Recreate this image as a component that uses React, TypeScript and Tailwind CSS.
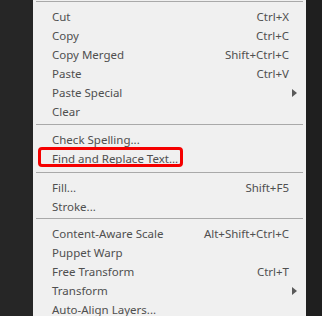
import React from "react";

type Item = { label: string; shortcut?: string; sub?: boolean; highlight?: boolean };

const groups: Item[][] = [
  [
    { label: "Cut", shortcut: "Ctrl+X" },
    { label: "Copy", shortcut: "Ctrl+C" },
    { label: "Copy Merged", shortcut: "Shift+Ctrl+C" },
    { label: "Paste", shortcut: "Ctrl+V" },
    { label: "Paste Special", sub: true },
    { label: "Clear" },
  ],
  [
    { label: "Check Spelling..." },
    { label: "Find and Replace Text...", highlight: true },
  ],
  [
    { label: "Fill...", shortcut: "Shift+F5" },
    { label: "Stroke..." },
  ],
  [
    { label: "Content-Aware Scale", shortcut: "Alt+Shift+Ctrl+C" },
    { label: "Puppet Warp" },
    { label: "Free Transform", shortcut: "Ctrl+T" },
    { label: "Transform", sub: true },
    { label: "Auto-Align Layers..." },
  ],
];

const sepClasses = [
  "",
  "mx-[3px] mb-[5px] mt-[3px] h-px bg-[#a9a9a9]",
  "mx-[3px] mb-[5px] mt-[4px] h-px bg-[#a9a9a9]",
  "mx-[3px] mb-[5px] mt-[2px] h-px bg-[#a9a9a9]",
];

function Row({ item }: { item: Item }) {
  return (
    <div className="relative flex h-[19px] items-center pl-[19px] pr-[17px]">
      <span className="flex-1 whitespace-nowrap">{item.label}</span>
      {item.shortcut && <span className="whitespace-nowrap">{item.shortcut}</span>}
      {item.sub && (
        <svg className="absolute right-[9px] top-[6px]" width="5" height="8" viewBox="0 0 5 8">
          <path d="M0 0 L5 4 L0 8 Z" fill="#5a5a5a" />
        </svg>
      )}
      {item.highlight && (
        <div className="pointer-events-none absolute left-[5px] top-[-2px] h-[20px] w-[145px] rounded-[4px] border-[3px] border-[#f50000]" />
      )}
    </div>
  );
}

export default function App() {
  return (
    <div
      className="flex h-[316px] w-[322px] overflow-hidden bg-[#262626] text-[11.5px] text-[#4f4f4f]"
      style={{ fontFamily: '"Noto Sans", "Open Sans", sans-serif' }}
    >
      <div className="w-[33px] shrink-0 bg-[#262626]" />
      <div className="w-[273px] shrink-0 bg-[#f0f0f0] pt-[1px]">
        <div className="mx-[3px] h-px bg-[#a9a9a9]" />
        <div className="h-[5px]" />
        {groups.map((g, gi) => (
          <div key={gi}>
            {gi > 0 && <div className={sepClasses[gi]} />}
            {g.map((it) => (
              <Row key={it.label} item={it} />
            ))}
          </div>
        ))}
      </div>
      <div className="flex-1 bg-[#1f1f1f]" />
    </div>
  );
}
